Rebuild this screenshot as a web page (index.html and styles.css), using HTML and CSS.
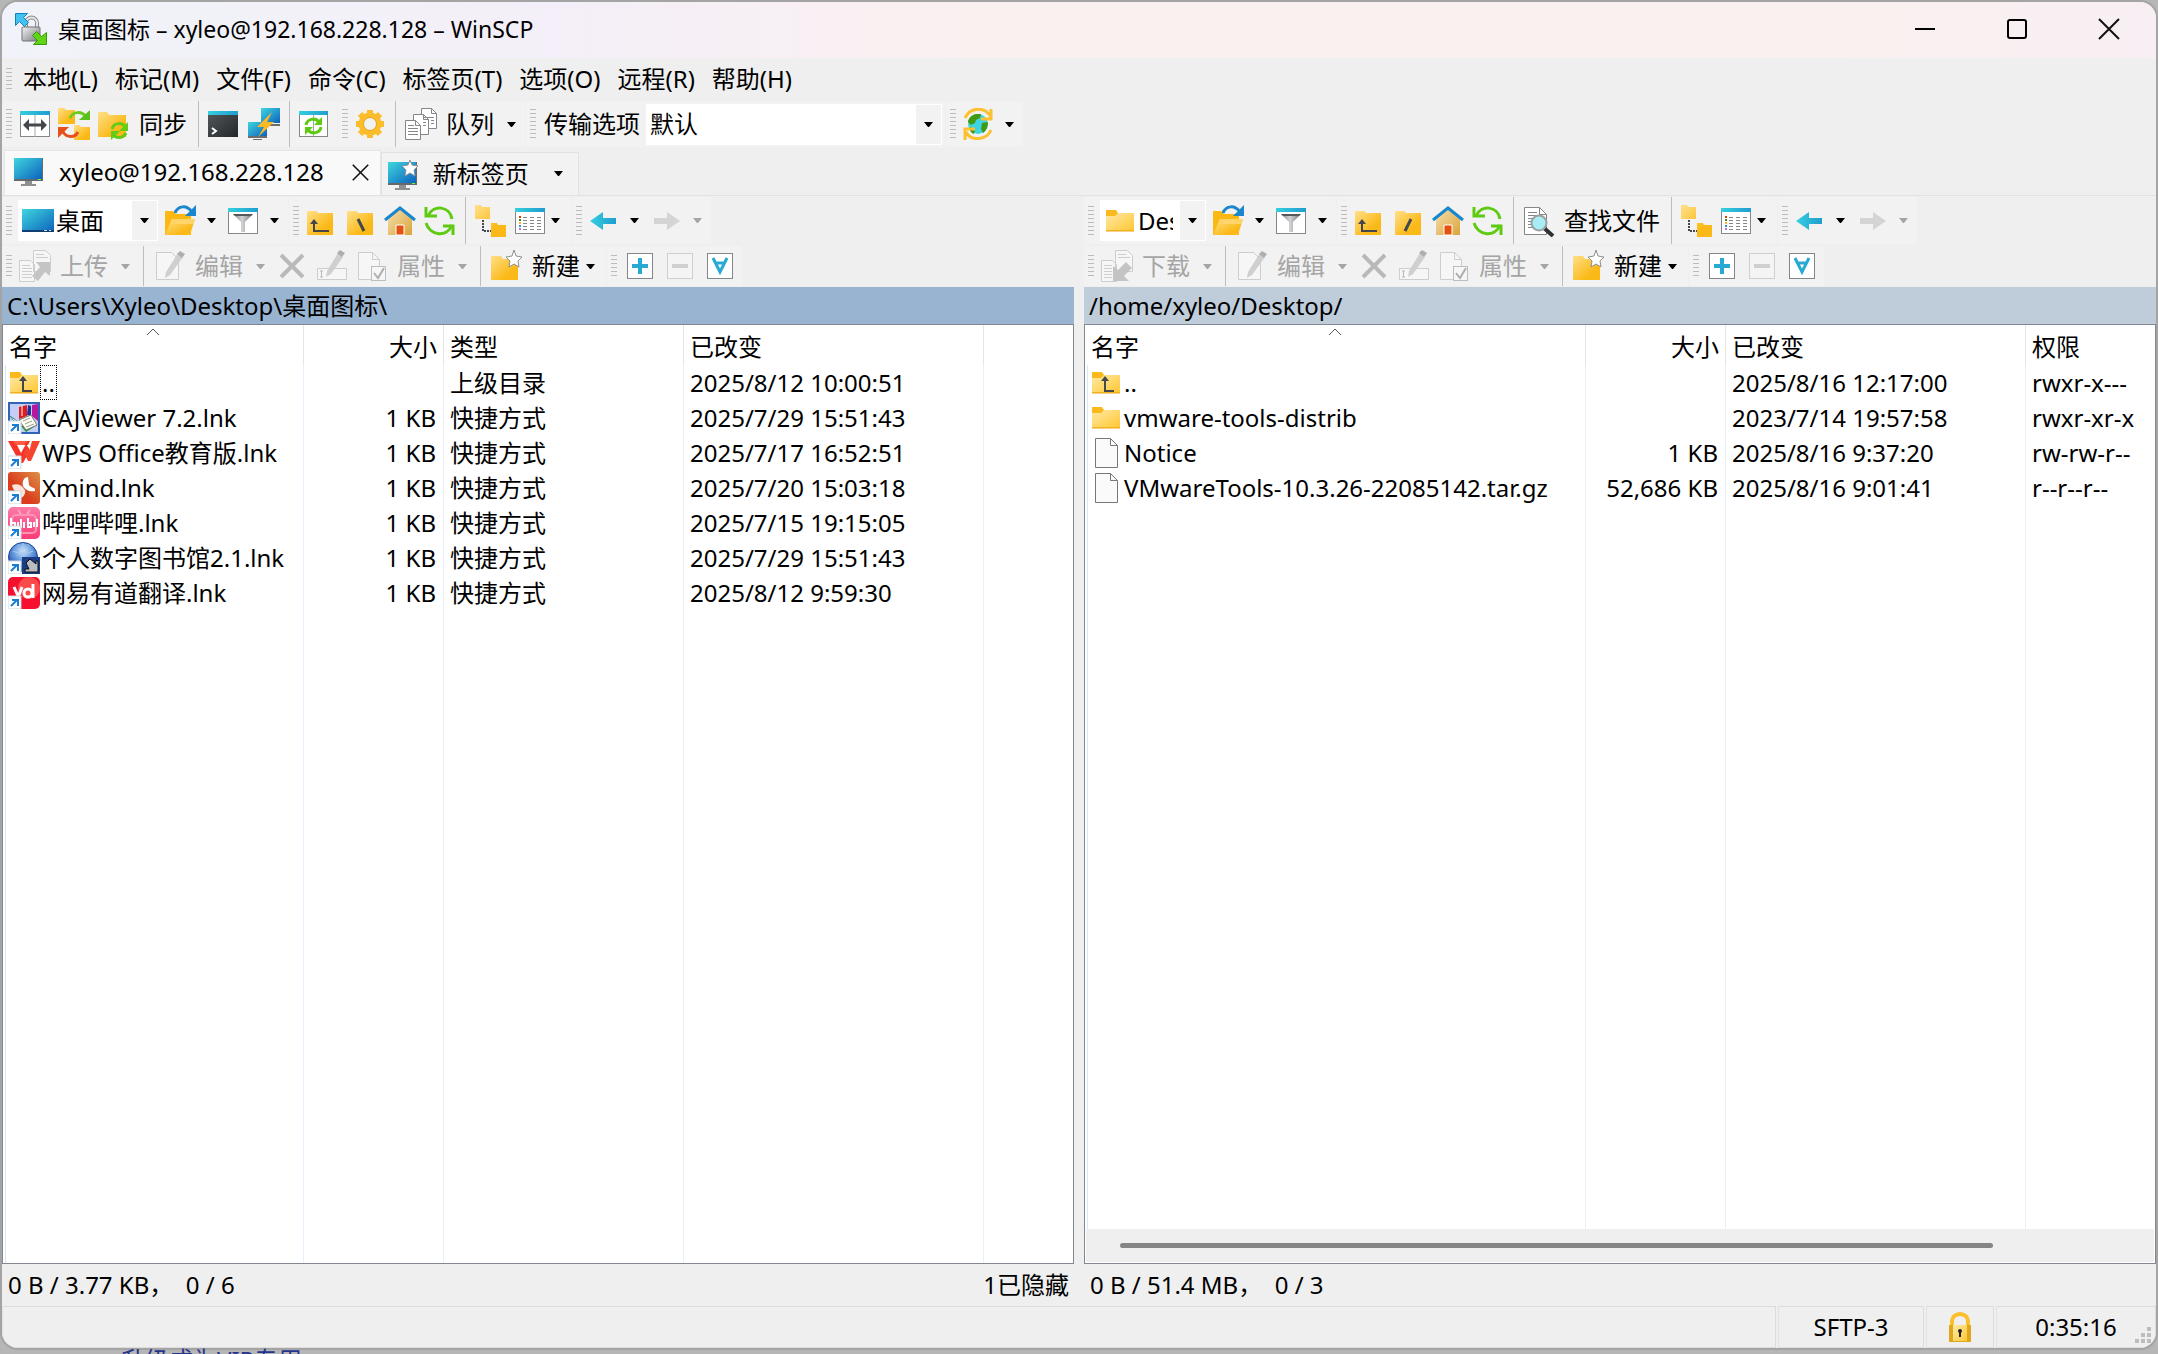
FILE: index.html
```
<!DOCTYPE html>
<html lang="zh-CN">
<head>
    <meta charset="UTF-8">
    <title>桌面图标 – xyleo@192.168.228.128 – WinSCP</title>
    <link rel="stylesheet" href="styles.css">
</head>
<body>
<!-- icon sprite -->
<svg class="sprite" aria-hidden="true">
    <defs>
        <linearGradient id="g-blue" x1="0" y1="0" x2="1" y2="1"><stop offset="0" stop-color="#3fd6de"/><stop offset="1" stop-color="#0d62bd"/></linearGradient>
        <linearGradient id="g-cyan" x1="0" y1="0" x2="1" y2="0"><stop offset="0" stop-color="#35cfe0"/><stop offset="1" stop-color="#1f9dce"/></linearGradient>
        <linearGradient id="g-fold" x1="0" y1="0" x2="1" y2="1"><stop offset="0" stop-color="#ffe08a"/><stop offset=".7" stop-color="#fbb917"/></linearGradient>
        <linearGradient id="g-soft" x1="0" y1="0" x2="1" y2="1"><stop offset="0" stop-color="#ffe9a8"/><stop offset="1" stop-color="#ffc833"/></linearGradient>
        <linearGradient id="g-house" x1="0" y1="0" x2="1" y2="1"><stop offset="0" stop-color="#f5dfae"/><stop offset="1" stop-color="#dba43c"/></linearGradient>
        <linearGradient id="g-gray" x1="0" y1="0" x2="1" y2="0"><stop offset="0" stop-color="#7c7f82"/><stop offset=".45" stop-color="#d3d4d6"/><stop offset="1" stop-color="#6b6e71"/></linearGradient>
        <linearGradient id="g-dark" x1="0" y1="0" x2="1" y2="1"><stop offset="0" stop-color="#54585c"/><stop offset="1" stop-color="#25282b"/></linearGradient>
        <linearGradient id="g-metal" x1="0" y1="0" x2="1" y2="1"><stop offset="0" stop-color="#f4f4f4"/><stop offset="1" stop-color="#76787a"/></linearGradient>
        <linearGradient id="g-xmind" x1="1" y1="0" x2="0" y2="1"><stop offset="0" stop-color="#dd9148"/><stop offset=".6" stop-color="#da3d1d"/><stop offset="1" stop-color="#e03a1c"/></linearGradient>
        <linearGradient id="g-pink" x1="0" y1="0" x2="0" y2="1"><stop offset="0" stop-color="#fb7aa8"/><stop offset="1" stop-color="#fb3b76"/></linearGradient>
        <radialGradient id="g-globe" cx=".5" cy=".3" r=".7"><stop offset="0" stop-color="#cfe6fb"/><stop offset=".5" stop-color="#5f95dc"/><stop offset="1" stop-color="#1b3f9c"/></radialGradient>
    </defs>

    <symbol id="i-app" viewBox="0 0 32 32">
        <path d="M11 14v-4a5 5 0 0 1 11 0v4" fill="none" stroke="#8b8d8f" stroke-width="4"/>
        <path d="M11 14v-4a5 5 0 0 1 11 0v4" fill="none" stroke="#e6e6e6" stroke-width="2"/>
        <rect x="7" y="14" width="18" height="14" rx="1" fill="url(#g-metal)" stroke="#707274"/>
        <path d="M0.500 .500h12l-4 4 5 5-4 4-5-5-4 4z" fill="#43c4f0" stroke="#1580bd"/>
        <path d="M31.500 31.500h-13l4-4-5-5 4-4 5 5 5-4z" fill="#62d416" stroke="#369b0b"/>
    </symbol>
    <symbol id="i-compare" viewBox="0 0 32 32">
        <rect x="2.500" y="3.500" width="29" height="25" fill="#fff" stroke="#84878a"/>
        <path d="M17 4v25" stroke="#a5a7a9"/>
        <path d="M2 3h30v4H2z" fill="url(#g-cyan)"/>
        <path d="M8 17h18" stroke="#44484c" stroke-width="3"/>
        <path d="M11 11l-6 6 6 6zM23 11l6 6-6 6z" fill="#44484c"/>
    </symbol>
    <symbol id="i-syncdirs" viewBox="0 0 32 32">
        <path d="M0 0h6l2 2h9v14H0z" fill="url(#g-fold)"/>
        <path d="M16 17h5l2 2h9v13H16z" fill="url(#g-fold)"/>
        <path d="M12 10c3-7 12-7 16-1" fill="none" stroke="#6ccb1f" stroke-width="3"/>
        <path d="M32 2v10H21z" fill="#5bc11a"/>
        <path d="M20 24c-3 6-11 6-15 0" fill="none" stroke="#e4511c" stroke-width="3"/>
        <path d="M0 30V19h11z" fill="#e4511c"/>
    </symbol>
    <symbol id="i-sync" viewBox="0 0 32 32">
        <path d="M0 4h9l2 3h17v22H0z" fill="url(#g-fold)"/>
        <path d="M14 21c2-7 11-7 14-1M28 25c-3 6-11 6-14 0" fill="none" stroke="#64cc17" stroke-width="3"/>
        <path d="M30 14v9h-9zM13 32v-9h9z" fill="#64cc17"/>
    </symbol>
    <symbol id="i-term" viewBox="0 0 32 32">
        <path d="M0 3h30v26H0z" fill="url(#g-dark)"/>
        <path d="M0 3h30v4H0z" fill="url(#g-cyan)"/>
        <path d="M4 20l4 3-4 3" fill="none" stroke="#fff" stroke-width="2"/>
    </symbol>
    <symbol id="i-putty" viewBox="0 0 32 32">
        <path d="M13 0h19v15H13z" fill="url(#g-blue)"/><path d="M14 16h18v2H14z" fill="#6a6e72"/>
        <path d="M0 14h19v14H0z" fill="url(#g-blue)"/><path d="M0 28h19v2H0zM5 31h9v1H5z" fill="#6a6e72"/>
        <path d="M24 4L9 19h7l-6 10 16-15h-7z" fill="#fdb827"/>
    </symbol>
    <symbol id="i-winrefresh" viewBox="0 0 32 32">
        <rect x=".5" y="3.500" width="28" height="25" fill="#fff" stroke="#84878a"/>
        <path d="M14.500 4v24" stroke="#a5a7a9"/>
        <path d="M0 3h29v4H0z" fill="url(#g-cyan)"/>
        <path d="M7 17c1-6 9-8 13-3M22 19c-1 6-9 8-13 3" fill="none" stroke="#5fcb10" stroke-width="3"/>
        <path d="M23 9v8h-8zM6 27v-8h8z" fill="#5fcb10"/>
    </symbol>
    <symbol id="i-gear" viewBox="0 0 32 32">
        <circle cx="16" cy="16" r="9" fill="none" stroke="#fcbd2b" stroke-width="5"/>
        <path d="M16 2v5M16 25v5M2 16h5M25 16h5M6 6l4 4M22 22l4 4M26 6l-4 4M10 22l-4 4" stroke="#fcbd2b" stroke-width="6"/>
        <circle cx="16" cy="16" r="6.500" fill="none" stroke="#e5a31c"/>
    </symbol>
    <symbol id="i-queue" viewBox="0 0 32 32">
        <g fill="#fff" stroke="#84878a">
            <path d="M16.500.5h10l5 5v15h-15z"/><path d="M8.500 6.500h10l5 5v15h-15z"/><path d="M.5 12.500h10l5 5v14H.5z"/>
        </g>
        <path d="M26.500.5v5h5M18.500 6.500v5h5M10.500 12.500v5h5M3 17.500h6M3 20.500h10M3 23.500h10M3 26.500h10M18 14.500h3M18 17.500h3M19 9.500h10M26 12.500h3M26 15.500h3" stroke="#84878a" fill="none"/>
    </symbol>
    <symbol id="i-globe" viewBox="0 0 32 32">
        <circle cx="16" cy="16" r="10" fill="#3ed4e2"/>
        <path d="M14 6c-5 1-8 5-8 8l3 3 4-2 1-3 4-2 1-4zM20 15l6-1c0 5-2 9-5 11l-2-4zM8 19l5 3-1 4c-3-1-5-4-4-7z" fill="#419a14"/>
        <path d="M3 10c5-11 20-12 26-1M29 22c-4 10-20 12-25 2" fill="none" stroke="#fdc02f" stroke-width="3"/>
        <path d="M29 1v10H19M3 32V21h10" fill="none" stroke="#fdc02f" stroke-width="3"/>
    </symbol>
    <symbol id="i-monitor" viewBox="0 0 32 32">
        <path d="M1 2h29v23H1z" fill="#65696d"/><path d="M1 2h28v21H1z" fill="url(#g-blue)"/>
        <path d="M12 25h7v3h4v2H8v-2h4z" fill="#8d9093"/><path d="M25 23h3v1h-3z" fill="#6f3"/>
    </symbol>
    <symbol id="i-newtab" viewBox="0 0 32 32">
        <path d="M1 4h29v23H1z" fill="#65696d"/><path d="M1 4h28v21H1z" fill="url(#g-blue)"/>
        <path d="M12 27h7v3h4v2H8v-2h4z" fill="#8d9093"/><path d="M25 25h3v1h-3z" fill="#6f3"/>
        <path d="M23 2l2 5 6 1-4 4 1 6-5-3-5 3 1-6-4-4 6-1z" fill="#fff" stroke="#8d9093"/>
    </symbol>
    <symbol id="i-desktop" viewBox="0 0 32 32">
        <path d="M0 4h32v23H0z" fill="url(#g-blue)"/><path d="M0 25h32v2H0z" fill="#103f73"/><path d="M22 25h3v1h-3zM27 25h2v1h-2z" fill="#cde"/>
    </symbol>
    <symbol id="i-folder" viewBox="0 0 32 32">
        <path d="M2 5h10l2 3h16v18H2z" fill="#fcb91e"/><path d="M2 11h9l3-3h16v17H2z" fill="url(#g-soft)"/><path d="M2 26h28" stroke="#eba81a"/>
    </symbol>
    <symbol id="i-up" viewBox="0 0 32 32">
        <use href="#i-folder"/>
        <path d="M15 12v12h9" fill="none" stroke="#44484c" stroke-width="2"/><path d="M15 9l4 5h-8z" fill="#44484c"/>
    </symbol>
    <symbol id="i-open" viewBox="0 0 32 32">
        <path d="M1 6h8l3 3h15v21H1z" fill="#fbb813"/><path d="M8 14h23l-5 16H1z" fill="url(#g-fold)"/><path d="M8 14h23l-2 5H6z" fill="#ffd569"/>
        <path d="M11 8c3-8 12-8 17-1" fill="none" stroke="#1b86cc" stroke-width="3"/><path d="M32 0v11H21z" fill="#1b86cc"/>
    </symbol>
    <symbol id="i-filter" viewBox="0 0 32 32">
        <rect x="1.500" y="3.500" width="29" height="25" fill="#fff" stroke="#84878a"/><path d="M1 3h30v4H1z" fill="url(#g-cyan)"/>
        <path d="M6 9h20l-8 8v10h-4V17z" fill="url(#g-gray)"/><path d="M6 9h20l-2 2H8z" fill="#55585b"/>
    </symbol>
    <symbol id="i-parent" viewBox="0 0 32 32">
        <path d="M3 6h9l2 2h15v22H3z" fill="url(#g-fold)"/>
        <path d="M10 17v9h15" fill="none" stroke="#44484c" stroke-width="2"/><path d="M10 14l4 5H6z" fill="#44484c"/>
    </symbol>
    <symbol id="i-rootback" viewBox="0 0 32 32">
        <path d="M3 6h9l2 2h15v22H3z" fill="url(#g-fold)"/><path d="M14 14l6 12" stroke="#44484c" stroke-width="3"/>
    </symbol>
    <symbol id="i-rootfwd" viewBox="0 0 32 32">
        <path d="M3 6h9l2 2h15v22H3z" fill="url(#g-fold)"/><path d="M19 14l-6 12" stroke="#44484c" stroke-width="3"/>
    </symbol>
    <symbol id="i-home" viewBox="0 0 32 32">
        <path d="M4 14L16 4l12 10v16H4z" fill="url(#g-house)"/><path d="M12 20h8v10h-8z" fill="#e4510f" stroke="#fff"/>
        <path d="M1 15L16 3l15 12" fill="none" stroke="#1a86cb" stroke-width="3"/>
    </symbol>
    <symbol id="i-refresh" viewBox="0 0 32 32">
        <path d="M4 11C9-1 26 1 28 14M28 20C23 33 6 31 2 18" fill="none" stroke="#5ecb12" stroke-width="3"/>
        <path d="M2 2v9h11M29 30v-9H19" fill="none" stroke="#5ecb12" stroke-width="3"/>
    </symbol>
    <symbol id="i-tree" viewBox="0 0 32 32">
        <path d="M0 0h6l1 2h8v12H0zM16 18h6l1 2h8v12H16z" fill="url(#g-fold)"/>
        <path d="M8 15v11h8" fill="none" stroke="#44484c" stroke-width="2" stroke-dasharray="2 1"/>
    </symbol>
    <symbol id="i-list" viewBox="0 0 32 32">
        <rect x=".5" y="3.500" width="29" height="25" fill="#fff" stroke="#84878a"/><path d="M0 3h30v4H0z" fill="url(#g-cyan)"/>
        <path d="M8 12.500h4M8 15.500h4M8 18.500h4M8 21.500h4M8 24.500h4M15 12.500h4M15 15.500h4M15 18.500h4M15 21.500h4M15 24.500h4M22 12.500h4M22 15.500h4M22 18.500h4M22 21.500h4M22 24.500h4" stroke="#84878a"/>
        <path d="M4 11h2v2H4z" fill="#d83b01"/><path d="M4 14h2v2H4z" fill="#3f8f10"/><path d="M4 17h2v2H4z" fill="#fcb91e"/><path d="M4 20h2v2H4z" fill="#1a9bd7"/><path d="M4 23h2v2H4z" fill="#b66fe8"/>
    </symbol>
    <symbol id="i-left" viewBox="0 0 32 32"><path d="M3 16L16 7v6h13v6H16v6z" fill="url(#g-cyan)"/></symbol>
    <symbol id="i-right" viewBox="0 0 32 32"><path d="M30 16L17 7v6H4v6h13v6z" fill="#d4d4d4"/></symbol>
    <symbol id="i-find" viewBox="0 0 32 32">
        <path d="M1.500 2.500h15l7 7v20h-22z" fill="#fff" stroke="#84878a"/>
        <path d="M16.500 2.500v7h7M5 7.500h9M5 10.500h9M5 13.500h9M5 16.500h6M5 19.500h6M5 22.500h6" fill="none" stroke="#84878a"/>
        <path d="M21 23l9 8" stroke="#2f3235" stroke-width="4"/><circle cx="16" cy="18" r="7.500" fill="#a6eef3" stroke="#9da0a3" stroke-width="2"/>
    </symbol>
    <symbol id="i-upload" viewBox="0 0 32 32">
        <path d="M14.500.5h12l5 5v16h-17zM.5 10.500h11l4 4v17H.5z" fill="#f6f6f6" stroke="#cdcdcd"/>
        <path d="M17 4.500h8M17 7.500h12M3 15.500h8M3 18.500h10M3 21.500h10M3 24.500h10M3 27.500h10" stroke="#cdcdcd"/>
        <path d="M31 12v14l-5-4-7 9-6-5 8-9-4-5z" fill="#c4c4c4"/>
    </symbol>
    <symbol id="i-download" viewBox="0 0 32 32">
        <path d="M14.500.5h12l5 5v16h-17zM.5 10.500h11l4 4v17H.5z" fill="#f6f6f6" stroke="#cdcdcd"/>
        <path d="M17 4.500h8M17 7.500h12M3 15.500h8M3 18.500h8M3 21.500h8M3 24.500h8M3 27.500h8" stroke="#cdcdcd"/>
        <path d="M12 31V16l5 4 8-8 6 6-8 8 5 5z" fill="#c4c4c4"/>
    </symbol>
    <symbol id="i-edit" viewBox="0 0 32 32">
        <path d="M2.500 2.500h15l7 7v20h-22z" fill="#f6f6f6" stroke="#cdcdcd"/>
        <path d="M24 3l5 4-13 18-5 3 1-6z" fill="#cfcfcf"/><path d="M26 1l5 3-3 4-5-4z" fill="#aeaeae"/>
    </symbol>
    <symbol id="i-delete" viewBox="0 0 32 32"><path d="M5 5l22 22M27 5L5 27" stroke="#b9b9b9" stroke-width="4"/></symbol>
    <symbol id="i-rename" viewBox="0 0 32 32">
        <path d="M1.500 18.500h29v11h-29z" fill="#f6f6f6" stroke="#cdcdcd"/><path d="M4 21h3M4 27h3M5.500 21v6" stroke="#b9b9b9"/>
        <path d="M22 3l5 4-12 17-5 3 1-6z" fill="#cfcfcf"/><path d="M24 0l5 3-3 4-5-4z" fill="#aeaeae"/>
    </symbol>
    <symbol id="i-props" viewBox="0 0 32 32">
        <path d="M2.500 2.500h14l7 7v20h-21z" fill="#f6f6f6" stroke="#cdcdcd"/><path d="M16.500 2.500v7h7" fill="none" stroke="#cdcdcd"/>
        <rect x="15.500" y="16.500" width="14" height="14" fill="#f6f6f6" stroke="#bdbdbd"/><path d="M18 23l4 5 6-10" fill="none" stroke="#aeaeae" stroke-width="2"/>
    </symbol>
    <symbol id="i-newdir" viewBox="0 0 32 32">
        <path d="M0 6h10l2 3h15v21H0z" fill="url(#g-fold)"/><path d="M23 0l2 6 6 1-4 4 1 6-5-3-5 3 1-6-4-4 6-1z" fill="#fff" stroke="#8d9093"/>
    </symbol>
    <symbol id="i-plus" viewBox="0 0 32 32"><rect x="3.500" y="3.500" width="25" height="25" fill="#fff" stroke="#84878a"/><path d="M16 8v16M8 16h16" stroke="#27a9d3" stroke-width="4"/></symbol>
    <symbol id="i-minus" viewBox="0 0 32 32"><rect x="3.500" y="3.500" width="25" height="25" fill="#f4f4f4" stroke="#cfcfcf"/><path d="M8 16h16" stroke="#cfcfcf" stroke-width="4"/></symbol>
    <symbol id="i-mask" viewBox="0 0 32 32"><rect x="3.500" y="3.500" width="25" height="25" fill="#fff" stroke="#84878a"/><path d="M9 8l7 14 7-14M11 13h10" fill="none" stroke="#27a9d3" stroke-width="3"/></symbol>
    <symbol id="i-file" viewBox="0 0 32 32"><path d="M5.500 1.500h15l7 7v22h-22z" fill="#fafafa" stroke="#75787b"/><path d="M20.500 1.500v7h7" fill="none" stroke="#75787b"/></symbol>
    <symbol id="i-shortcut" viewBox="0 0 32 32"><path d="M0 19h13v13H0z" fill="#fff" stroke="#cfd6df"/><path d="M3 29l6-6M4 23h6v6" fill="none" stroke="#1a7fd4" stroke-width="2"/></symbol>
    <symbol id="i-caj" viewBox="0 0 32 32">
        <path d="M1 1h30v30H1z" fill="#c3cdf5" stroke="#3164b8" stroke-width="2"/>
        <path d="M11 5l8-2v11l-8 3z" fill="#e01b1b"/><path d="M14 4v10" stroke="#fff"/><path d="M20 3l3 1v10l-4-1z" fill="#1d2f9b"/><path d="M24 3l6-1v17l-6-5z" fill="#b6179e"/>
        <path d="M2 14l10 7-2 3z" fill="#fff" stroke="#3a8f7a"/>
        <path d="M13 24l12-5 4 4-11 7z" fill="#1f9a3c"/><path d="M11 18l12-5 6 10-11 5z" fill="#fffef0" stroke="#777"/><path d="M15 19l7-3M17 22l7-3M18 25l8-3" stroke="#999"/>
        <use href="#i-shortcut"/>
    </symbol>
    <symbol id="i-wps" viewBox="0 0 32 32">
        <path d="M0 4h22l-2 4H9l4 8 5-9 4 6-7 13h-3z" fill="#f5352a"/><path d="M5 4h14l-3 4H8z" fill="#ff5c45"/><path d="M24 4h8l-9 20h-3l-4-8 3-5 2 4z" fill="#f5452f"/>
        <use href="#i-shortcut"/>
    </symbol>
    <symbol id="i-xmind" viewBox="0 0 32 32">
        <rect width="32" height="32" rx="3" fill="url(#g-xmind)"/>
        <path d="M15 14c-1-5 1-9 5-9l1 8c2 3 5 2 6 4v2c-5 1-10-1-12-5z" fill="#fff"/>
        <path d="M4 13c5-2 10 0 12 4l1 1c1 4-2 8-6 9v-6c-3 0-6-3-7-8z" fill="#f9e3dc"/>
        <use href="#i-shortcut"/>
    </symbol>
    <symbol id="i-bili" viewBox="0 0 32 32">
        <rect width="32" height="32" rx="5" fill="url(#g-pink)"/>
        <path d="M10 3l3 4M22 3l-3 4" fill="none" stroke="#fda3c2" stroke-width="2"/><rect x="4" y="8" width="24" height="18" rx="4" fill="none" stroke="#fd93b6" stroke-width="2"/>
        <path d="M3 11v9h4v-4H3M10 15v6M13 12v9M16 15v6M20 11v9h3v-4h-3M26 15v5M29 12v8" fill="none" stroke="#fff" stroke-width="2"/>
        <use href="#i-shortcut"/>
    </symbol>
    <symbol id="i-lib" viewBox="0 0 32 32">
        <circle cx="15" cy="15" r="14.500" fill="url(#g-globe)" stroke="#1c3f95"/><path d="M5 9c6 3 14 3 20 0M15 1v28" fill="none" stroke="#a9c9f2"/>
        <path d="M14 15h18v17H14z" fill="#1b3d86"/><path d="M18 21l4-4 6 5v-3h2v11H17v-3h4z" fill="#b9bcc0" stroke="#111"/>
        <use href="#i-shortcut"/>
    </symbol>
    <symbol id="i-youdao" viewBox="0 0 32 32">
        <rect width="32" height="32" rx="5" fill="#f5102f"/><circle cx="21" cy="11" r="11" fill="#fb4a4a"/>
        <path d="M6 10l4 9M14 10l-5 13H7" fill="none" stroke="#fff" stroke-width="3"/><circle cx="20" cy="16" r="4" fill="none" stroke="#fff" stroke-width="3"/><path d="M25 7v14" stroke="#fff" stroke-width="3"/>
        <use href="#i-shortcut"/>
    </symbol>
    <symbol id="i-lock" viewBox="0 0 32 32">
        <path d="M8 15v-5a8 7 0 0 1 16 0v5" fill="none" stroke="#fcbf2c" stroke-width="4"/><path d="M5 14h22v17H5z" fill="#e0a71c"/><path d="M9 14h14v16H9z" fill="url(#g-soft)"/>
        <circle cx="16" cy="20" r="2" fill="#222"/><path d="M15 20h2v6h-2z" fill="#222"/>
    </symbol>
    <symbol id="i-arrow" viewBox="0 0 9 5"><path d="M0 0h9L5 5H4z" fill="currentColor"/></symbol>
    <symbol id="i-caret" viewBox="0 0 14 8"><path d="M1 7l6-6 6 6" fill="none" stroke="#555"/></symbol>
    <symbol id="i-min" viewBox="0 0 22 22"><path d="M1 11h20" stroke="#000" stroke-width="2"/></symbol>
    <symbol id="i-max" viewBox="0 0 22 22"><rect x="2" y="2" width="18" height="18" rx="2" fill="none" stroke="#000" stroke-width="2"/></symbol>
    <symbol id="i-close" viewBox="0 0 22 22"><path d="M1 1l20 20M21 1L1 21" stroke="#111" stroke-width="2"/></symbol>
</svg>

<div class="window">
    <header class="titlebar">
        <svg class="icon"><use href="#i-app"/></svg>
        <h1>桌面图标 – xyleo@192.168.228.128 – WinSCP</h1>
        <button class="winbtn" aria-label="最小化"><svg><use href="#i-min"/></svg></button>
        <button class="winbtn" aria-label="最大化"><svg><use href="#i-max"/></svg></button>
        <button class="winbtn" aria-label="关闭"><svg><use href="#i-close"/></svg></button>
    </header>

    <nav class="menubar">
        <i class="grip"></i>
        <button>本地(L)</button>
        <button>标记(M)</button>
        <button>文件(F)</button>
        <button>命令(C)</button>
        <button>标签页(T)</button>
        <button>选项(O)</button>
        <button>远程(R)</button>
        <button>帮助(H)</button>
    </nav>

    <div class="toolrow toolrow-main">
        <div class="bar">
            <i class="grip"></i>
            <button class="tool" title="比较目录"><svg class="icon"><use href="#i-compare"/></svg></button>
            <button class="tool" title="同步浏览"><svg class="icon"><use href="#i-syncdirs"/></svg></button>
            <button class="tool"><svg class="icon"><use href="#i-sync"/></svg><span>同步</span></button>
            <i class="sep"></i>
            <button class="tool" title="终端"><svg class="icon"><use href="#i-term"/></svg></button>
            <button class="tool" title="PuTTY"><svg class="icon"><use href="#i-putty"/></svg></button>
            <i class="sep"></i>
            <button class="tool" title="刷新"><svg class="icon"><use href="#i-winrefresh"/></svg></button>
        </div>
        <div class="bar">
            <i class="grip"></i>
            <button class="tool" title="选项"><svg class="icon"><use href="#i-gear"/></svg></button>
            <i class="sep"></i>
            <button class="tool"><svg class="icon"><use href="#i-queue"/></svg><span>队列</span></button>
            <button class="drop" aria-label="队列选项"><svg><use href="#i-arrow"/></svg></button>
        </div>
        <div class="bar">
            <i class="grip"></i>
            <label class="preset" for="preset">传输选项</label>
            <div class="combo combo-preset">
                <select id="preset"><option>默认</option></select>
                <span class="combo-arrow"><svg><use href="#i-arrow"/></svg></span>
            </div>
        </div>
        <div class="bar">
            <i class="grip"></i>
            <button class="tool" title="更新"><svg class="icon"><use href="#i-globe"/></svg></button>
            <button class="drop" aria-label="更新选项"><svg><use href="#i-arrow"/></svg></button>
        </div>
    </div>

    <div class="tabs">
        <div class="tab active">
            <svg class="icon"><use href="#i-monitor"/></svg>
            <button class="tab-name">xyleo@192.168.228.128</button>
            <button class="tab-close" aria-label="关闭标签页"><svg><use href="#i-close"/></svg></button>
        </div>
        <div class="tab">
            <svg class="icon"><use href="#i-newtab"/></svg>
            <button class="tab-name">新标签页</button>
            <button class="drop" aria-label="标签页选项"><svg><use href="#i-arrow"/></svg></button>
        </div>
    </div>

    <main class="panes">
        <section class="pane">
            <div class="toolrow">
                <div class="bar">
                    <i class="grip"></i>
                    <div class="combo combo-local">
                        <svg class="icon"><use href="#i-desktop"/></svg>
                        <select aria-label="本地目录"><option>桌面</option></select>
                        <span class="combo-arrow"><svg><use href="#i-arrow"/></svg></span>
                    </div>
                    <button class="tool" title="打开目录"><svg class="icon"><use href="#i-open"/></svg></button>
                    <button class="drop" aria-label="书签"><svg><use href="#i-arrow"/></svg></button>
                    <button class="tool" title="过滤"><svg class="icon"><use href="#i-filter"/></svg></button>
                    <button class="drop" aria-label="过滤选项"><svg><use href="#i-arrow"/></svg></button>
                </div>
                <div class="bar">
                    <i class="grip"></i>
                    <button class="tool" title="上级目录"><svg class="icon"><use href="#i-parent"/></svg></button>
                    <button class="tool" title="根目录"><svg class="icon"><use href="#i-rootback"/></svg></button>
                    <button class="tool" title="主目录"><svg class="icon"><use href="#i-home"/></svg></button>
                    <button class="tool" title="刷新"><svg class="icon"><use href="#i-refresh"/></svg></button>
                    <i class="sep"></i>
                    <button class="tool" title="目录树"><svg class="icon"><use href="#i-tree"/></svg></button>
                    <button class="tool menu" title="查看"><svg class="icon"><use href="#i-list"/></svg><svg class="arrow"><use href="#i-arrow"/></svg></button>
                </div>
                <div class="bar">
                    <i class="grip"></i>
                    <button class="tool" title="后退"><svg class="icon"><use href="#i-left"/></svg></button>
                    <button class="drop" aria-label="后退历史"><svg><use href="#i-arrow"/></svg></button>
                    <button class="tool" title="前进" disabled><svg class="icon"><use href="#i-right"/></svg></button>
                    <button class="drop" aria-label="前进历史" disabled><svg><use href="#i-arrow"/></svg></button>
                </div>
            </div>
            <div class="toolrow toolrow-small">
                <div class="bar">
                    <i class="grip"></i>
                    <button class="tool" disabled><svg class="icon"><use href="#i-upload"/></svg><span>上传</span></button>
                    <button class="drop" aria-label="上传选项" disabled><svg><use href="#i-arrow"/></svg></button>
                    <i class="sep"></i>
                    <button class="tool" disabled><svg class="icon"><use href="#i-edit"/></svg><span>编辑</span></button>
                    <button class="drop" aria-label="编辑选项" disabled><svg><use href="#i-arrow"/></svg></button>
                    <button class="tool" title="删除" disabled><svg class="icon"><use href="#i-delete"/></svg></button>
                    <button class="tool" title="重命名" disabled><svg class="icon"><use href="#i-rename"/></svg></button>
                    <button class="tool" disabled><svg class="icon"><use href="#i-props"/></svg><span>属性</span></button>
                    <button class="drop" aria-label="属性选项" disabled><svg><use href="#i-arrow"/></svg></button>
                    <i class="sep"></i>
                    <button class="tool menu"><svg class="icon"><use href="#i-newdir"/></svg><span>新建</span><svg class="arrow"><use href="#i-arrow"/></svg></button>
                </div>
                <div class="bar">
                    <i class="grip"></i>
                    <button class="tool" title="选择"><svg class="icon"><use href="#i-plus"/></svg></button>
                    <button class="tool" title="取消选择" disabled><svg class="icon"><use href="#i-minus"/></svg></button>
                    <button class="tool" title="全选"><svg class="icon"><use href="#i-mask"/></svg></button>
                </div>
            </div>
            <div class="path path-active">C:\Users\Xyleo\Desktop\桌面图标\</div>
            <div class="list">
                <table class="files">
                    <colgroup><col class="c-local"><col class="c-size"><col class="c-type"><col class="c-date"><col></colgroup>
                    <thead>
                    <tr><th>名字<svg class="caret"><use href="#i-caret"/></svg></th><th class="num">大小</th><th>类型</th><th>已改变</th><th></th></tr>
                    </thead>
                    <tbody>
                    <tr><td><div class="name"><svg class="icon"><use href="#i-up"/></svg><span class="focus">..</span></div></td><td></td><td>上级目录</td><td>2025/8/12 10:00:51</td><td></td></tr>
                    <tr><td><div class="name"><svg class="icon"><use href="#i-caj"/></svg><span>CAJViewer 7.2.lnk</span></div></td><td class="num">1 KB</td><td>快捷方式</td><td>2025/7/29 15:51:43</td><td></td></tr>
                    <tr><td><div class="name"><svg class="icon"><use href="#i-wps"/></svg><span>WPS Office教育版.lnk</span></div></td><td class="num">1 KB</td><td>快捷方式</td><td>2025/7/17 16:52:51</td><td></td></tr>
                    <tr><td><div class="name"><svg class="icon"><use href="#i-xmind"/></svg><span>Xmind.lnk</span></div></td><td class="num">1 KB</td><td>快捷方式</td><td>2025/7/20 15:03:18</td><td></td></tr>
                    <tr><td><div class="name"><svg class="icon"><use href="#i-bili"/></svg><span>哔哩哔哩.lnk</span></div></td><td class="num">1 KB</td><td>快捷方式</td><td>2025/7/15 19:15:05</td><td></td></tr>
                    <tr><td><div class="name"><svg class="icon"><use href="#i-lib"/></svg><span>个人数字图书馆2.1.lnk</span></div></td><td class="num">1 KB</td><td>快捷方式</td><td>2025/7/29 15:51:43</td><td></td></tr>
                    <tr><td><div class="name"><svg class="icon"><use href="#i-youdao"/></svg><span>网易有道翻译.lnk</span></div></td><td class="num">1 KB</td><td>快捷方式</td><td>2025/8/12 9:59:30</td><td></td></tr>
                    <tr class="rest"><td></td><td></td><td></td><td></td><td></td></tr>
                    </tbody>
                </table>
            </div>
            <div class="summary"><span>0 B / 3.77 KB，  0 / 6</span><span>1已隐藏</span></div>
        </section>

        <section class="pane">
            <div class="toolrow">
                <div class="bar">
                    <i class="grip"></i>
                    <div class="combo combo-remote">
                        <svg class="icon"><use href="#i-folder"/></svg>
                        <select aria-label="远程目录"><option>Desktop</option></select>
                        <span class="combo-arrow"><svg><use href="#i-arrow"/></svg></span>
                    </div>
                    <button class="tool" title="打开目录"><svg class="icon"><use href="#i-open"/></svg></button>
                    <button class="drop" aria-label="书签"><svg><use href="#i-arrow"/></svg></button>
                    <button class="tool" title="过滤"><svg class="icon"><use href="#i-filter"/></svg></button>
                    <button class="drop" aria-label="过滤选项"><svg><use href="#i-arrow"/></svg></button>
                </div>
                <div class="bar">
                    <i class="grip"></i>
                    <button class="tool" title="上级目录"><svg class="icon"><use href="#i-parent"/></svg></button>
                    <button class="tool" title="根目录"><svg class="icon"><use href="#i-rootfwd"/></svg></button>
                    <button class="tool" title="主目录"><svg class="icon"><use href="#i-home"/></svg></button>
                    <button class="tool" title="刷新"><svg class="icon"><use href="#i-refresh"/></svg></button>
                    <i class="sep"></i>
                    <button class="tool"><svg class="icon"><use href="#i-find"/></svg><span>查找文件</span></button>
                    <i class="sep"></i>
                    <button class="tool" title="目录树"><svg class="icon"><use href="#i-tree"/></svg></button>
                    <button class="tool menu" title="查看"><svg class="icon"><use href="#i-list"/></svg><svg class="arrow"><use href="#i-arrow"/></svg></button>
                </div>
                <div class="bar">
                    <i class="grip"></i>
                    <button class="tool" title="后退"><svg class="icon"><use href="#i-left"/></svg></button>
                    <button class="drop" aria-label="后退历史"><svg><use href="#i-arrow"/></svg></button>
                    <button class="tool" title="前进" disabled><svg class="icon"><use href="#i-right"/></svg></button>
                    <button class="drop" aria-label="前进历史" disabled><svg><use href="#i-arrow"/></svg></button>
                </div>
            </div>
            <div class="toolrow toolrow-small">
                <div class="bar">
                    <i class="grip"></i>
                    <button class="tool" disabled><svg class="icon"><use href="#i-download"/></svg><span>下载</span></button>
                    <button class="drop" aria-label="下载选项" disabled><svg><use href="#i-arrow"/></svg></button>
                    <i class="sep"></i>
                    <button class="tool" disabled><svg class="icon"><use href="#i-edit"/></svg><span>编辑</span></button>
                    <button class="drop" aria-label="编辑选项" disabled><svg><use href="#i-arrow"/></svg></button>
                    <button class="tool" title="删除" disabled><svg class="icon"><use href="#i-delete"/></svg></button>
                    <button class="tool" title="重命名" disabled><svg class="icon"><use href="#i-rename"/></svg></button>
                    <button class="tool" disabled><svg class="icon"><use href="#i-props"/></svg><span>属性</span></button>
                    <button class="drop" aria-label="属性选项" disabled><svg><use href="#i-arrow"/></svg></button>
                    <i class="sep"></i>
                    <button class="tool menu"><svg class="icon"><use href="#i-newdir"/></svg><span>新建</span><svg class="arrow"><use href="#i-arrow"/></svg></button>
                </div>
                <div class="bar">
                    <i class="grip"></i>
                    <button class="tool" title="选择"><svg class="icon"><use href="#i-plus"/></svg></button>
                    <button class="tool" title="取消选择" disabled><svg class="icon"><use href="#i-minus"/></svg></button>
                    <button class="tool" title="全选"><svg class="icon"><use href="#i-mask"/></svg></button>
                </div>
            </div>
            <div class="path">/home/xyleo/Desktop/</div>
            <div class="list">
                <table class="files">
                    <colgroup><col class="c-remote"><col class="c-size"><col class="c-date"><col></colgroup>
                    <thead>
                    <tr><th>名字<svg class="caret"><use href="#i-caret"/></svg></th><th class="num">大小</th><th>已改变</th><th>权限</th></tr>
                    </thead>
                    <tbody>
                    <tr><td><div class="name"><svg class="icon"><use href="#i-up"/></svg><span>..</span></div></td><td></td><td>2025/8/16 12:17:00</td><td>rwxr-x---</td></tr>
                    <tr><td><div class="name"><svg class="icon"><use href="#i-folder"/></svg><span>vmware-tools-distrib</span></div></td><td></td><td>2023/7/14 19:57:58</td><td>rwxr-xr-x</td></tr>
                    <tr><td><div class="name"><svg class="icon"><use href="#i-file"/></svg><span>Notice</span></div></td><td class="num">1 KB</td><td>2025/8/16 9:37:20</td><td>rw-rw-r--</td></tr>
                    <tr><td><div class="name"><svg class="icon"><use href="#i-file"/></svg><span>VMwareTools-10.3.26-22085142.tar.gz</span></div></td><td class="num">52,686 KB</td><td>2025/8/16 9:01:41</td><td>r--r--r--</td></tr>
                    <tr class="rest"><td></td><td></td><td></td><td></td></tr>
                    </tbody>
                </table>
                <div class="hscroll"><div class="thumb"></div></div>
            </div>
            <div class="summary"><span>0 B / 51.4 MB，  0 / 3</span></div>
        </section>
    </main>

    <footer class="statusbar">
        <div class="cell cell-hint"></div>
        <div class="cell cell-proto">SFTP-3</div>
        <div class="cell cell-lock"><svg class="icon"><use href="#i-lock"/></svg></div>
        <div class="cell cell-time">0:35:16
            <svg class="sizegrip" viewBox="0 0 16 16"><path d="M12 0h4v4h-4zM6 6h4v4H6zM12 6h4v4h-4zM0 12h4v4H0zM6 12h4v4H6zM12 12h4v4h-4z" fill="#bdbdbd"/></svg>
        </div>
    </footer>
</div>
<div class="behind">升级成为VIP专用</div>
</body>
</html>
```
FILE: styles.css
```
* {
    box-sizing: border-box;
}

body {
    margin: 0;
    height: 100vh;
    display: flex;
    flex-direction: column;
    overflow: hidden;
    background-color: #b6b6b6;
    color: #000;
    font-family: "Noto Sans", "Noto Sans CJK SC", sans-serif;
    font-size: 24px;
    line-height: 34px;
}

button, select {
    font: inherit;
    color: inherit;
    background: none;
    border: none;
    margin: 0;
    padding: 0;
    white-space: nowrap;
}

.sprite {
    position: absolute;
    width: 0;
    height: 0;
}

.icon {
    width: 32px;
    height: 32px;
    flex: none;
}

.window {
    flex: 1;
    min-height: 0;
    margin: 2px 2px 0;
    display: flex;
    flex-direction: column;
    background-color: #efefef;
    border-radius: 16px;
    overflow: hidden;
    box-shadow: 0 0 0 2px #a4a4a4;
}

/* what shows below the window */
.behind {
    height: 6px;
    padding-left: 121px;
    overflow: hidden;
    color: #26358c;
    line-height: 24px;
}

/* title bar */
.titlebar {
    height: 56px;
    flex: none;
    display: flex;
    align-items: center;
    padding: 0 1px 2px 13px;
    background: linear-gradient(90deg, #f0f3f9 0%, #f4eff8 26%, #faf0f0 45%, #faf0ef 85%, #f8eff4 100%);
}

.titlebar h1 {
    flex: 1;
    margin: 0 0 0 11px;
    font-size: 23px;
    font-weight: normal;
}

.winbtn {
    width: 92px;
    height: 54px;
    display: flex;
    align-items: center;
    justify-content: center;
}

.winbtn svg {
    width: 22px;
    height: 22px;
}

/* menu */
.menubar {
    height: 42px;
    flex: none;
    display: flex;
    align-items: center;
    padding-left: 4px;
}

.menubar button {
    padding: 0 9px 0 8px;
}

.grip {
    width: 6px;
    height: 30px;
    flex: none;
    margin-right: 1px;
    background: repeating-linear-gradient(#bcbcbc 0 1px, transparent 1px 4px);
}

.menubar .grip {
    height: 22px;
    margin-right: 3px;
}

/* toolbars */
.toolrow {
    height: 49px;
    flex: none;
    display: flex;
    gap: 1px;
    padding: 1px 0;
}

.toolrow-main {
    height: 48px;
}

.toolrow-small {
    height: 42px;
}

.bar {
    display: flex;
    align-items: center;
    padding: 0 2px 0 4px;
    background-color: #f2f2f2;
    border-radius: 3px;
}

.toolrow-main .grip {
    margin-right: 2px;
}

.toolrow-small .grip {
    height: 22px;
    margin-right: 3px;
}

.tool {
    height: 40px;
    flex: none;
    display: flex;
    align-items: center;
    padding: 0 4px;
}

.tool span {
    margin: 0 2px 0 9px;
}

.tool:disabled, .drop:disabled {
    color: #a5a5a5;
}

.tool .arrow {
    width: 9px;
    height: 5px;
    margin: 0 5px 0 4px;
}

.drop {
    width: 23px;
    height: 40px;
    flex: none;
    display: flex;
    align-items: center;
    justify-content: center;
}

.drop svg, .combo-arrow svg {
    width: 9px;
    height: 5px;
}

.sep {
    width: 11px;
    align-self: stretch;
    flex: none;
    background: linear-gradient(#bdbdbd, #bdbdbd) center / 1px 100% no-repeat;
}

.toolrow-small .sep {
    width: 13px;
}

.preset {
    padding: 0 6px;
}

.combo {
    height: 41px;
    flex: none;
    display: flex;
    align-items: center;
    background-color: #fff;
    margin-right: 2px;
    padding: 1px 1px 1px 4px;
}

.combo select {
    flex: 1;
    min-width: 0;
    height: 39px;
    appearance: none;
    overflow: hidden;
}

.combo-arrow {
    width: 25px;
    align-self: stretch;
    display: flex;
    align-items: center;
    justify-content: center;
    background-color: #f2f2f2;
}

.combo-preset {
    width: 296px;
    margin-right: 1px;
}

.combo-local, .combo-remote {
    margin-left: 5px;
}

.combo-local {
    width: 140px;
}

.combo-local select, .combo-remote select {
    padding-left: 2px;
}

.combo-remote {
    width: 106px;
}

.combo-remote .combo-arrow {
    margin-left: 7px;
}

/* session tabs */
.tabs {
    height: 48px;
    flex: none;
    display: flex;
    align-items: flex-end;
    padding-left: 2px;
    border-bottom: 1px solid #e2e2e2;
}

.tab {
    height: 43px;
    display: flex;
    align-items: center;
    padding: 0 8px 1px 5px;
    background-color: #f2f2f2;
    border: 1px solid #e2e2e2;
    border-bottom: none;
}

.tab.active {
    height: 45px;
    padding: 0 11px 2px 8px;
    background-color: #f9f9f9;
    border-color: #e6e6e6;
}

.tab-name {
    margin: 0 18px 0 14px;
}

.tab.active .tab-name {
    margin-right: 28px;
}

.tab-close svg {
    display: block;
    width: 17px;
    height: 17px;
}

/* panes */
.panes {
    flex: 1;
    min-height: 0;
    display: flex;
    gap: 10px;
}

.pane {
    flex: 1 1 0;
    min-width: 0;
    display: flex;
    flex-direction: column;
}

.path {
    height: 37px;
    flex: none;
    padding-left: 5px;
    background-color: #bfcddb;
    line-height: 38px;
}

.path-active {
    background-color: #99b4d1;
}

.list {
    flex: 1;
    min-height: 0;
    display: flex;
    flex-direction: column;
    background-color: #fff;
    border: 1px solid #828790;
}

.files {
    flex: 1;
    width: 100%;
    min-height: 0;
    table-layout: fixed;
    border-collapse: separate;
    border-spacing: 0;
}

.files th, .files td {
    height: 35px;
    padding: 0 6px;
    text-align: left;
    font-weight: normal;
    white-space: nowrap;
    border-right: 1px solid #e8f1fb;
}

.files th {
    position: relative;
    height: 40px;
    padding-top: 3px;
    border-right-color: #e5e5e5;
}

.files th:last-child, .files td:last-child {
    border-right: none;
}

.files td:first-child {
    padding: 0;
    background: linear-gradient(#d6e6fa, #d6e6fa) 2px 0 / 1px 100% no-repeat;
}

.files .num {
    text-align: right;
}

.files td.num {
    padding-right: 7px;
}

.files .rest td {
    height: auto;
}

.files .rest {
    height: 100%;
}

.c-local {
    width: 301px;
}

.c-remote {
    width: 501px;
}

.c-size {
    width: 140px;
}

.c-type {
    width: 240px;
}

.c-date {
    width: 300px;
}

.caret {
    position: absolute;
    top: 3px;
    left: 50%;
    width: 14px;
    height: 8px;
    margin-left: -7px;
}

.name {
    display: flex;
    align-items: center;
    gap: 1px;
    padding-left: 5px;
}

.name span {
    padding: 0 1px;
    line-height: 33px;
}

.name .focus {
    outline: 1px dotted #000;
}

.hscroll {
    height: 34px;
    flex: none;
    padding: 14px 161px 0 34px;
    background-color: #efefef;
    border: 1px solid #fff;
    border-top: none;
}

.thumb {
    height: 5px;
    border-radius: 3px;
    background-color: #858585;
}

.summary {
    height: 42px;
    flex: none;
    display: flex;
    justify-content: space-between;
    align-items: center;
    padding: 0 5px 0 6px;
    white-space: pre;
}

/* status bar */
.statusbar {
    height: 42px;
    flex: none;
    display: flex;
    gap: 2px;
}

.cell {
    position: relative;
    display: flex;
    align-items: center;
    justify-content: center;
    border: 1px solid #dcdcdc;
    border-left-color: #e2e2e2;
}

.cell-hint {
    flex: 1;
}

.cell-proto {
    width: 146px;
}

.cell-lock {
    width: 68px;
}

.cell-time {
    width: 160px;
}

.sizegrip {
    position: absolute;
    right: 4px;
    bottom: 4px;
    width: 16px;
    height: 16px;
}
```
